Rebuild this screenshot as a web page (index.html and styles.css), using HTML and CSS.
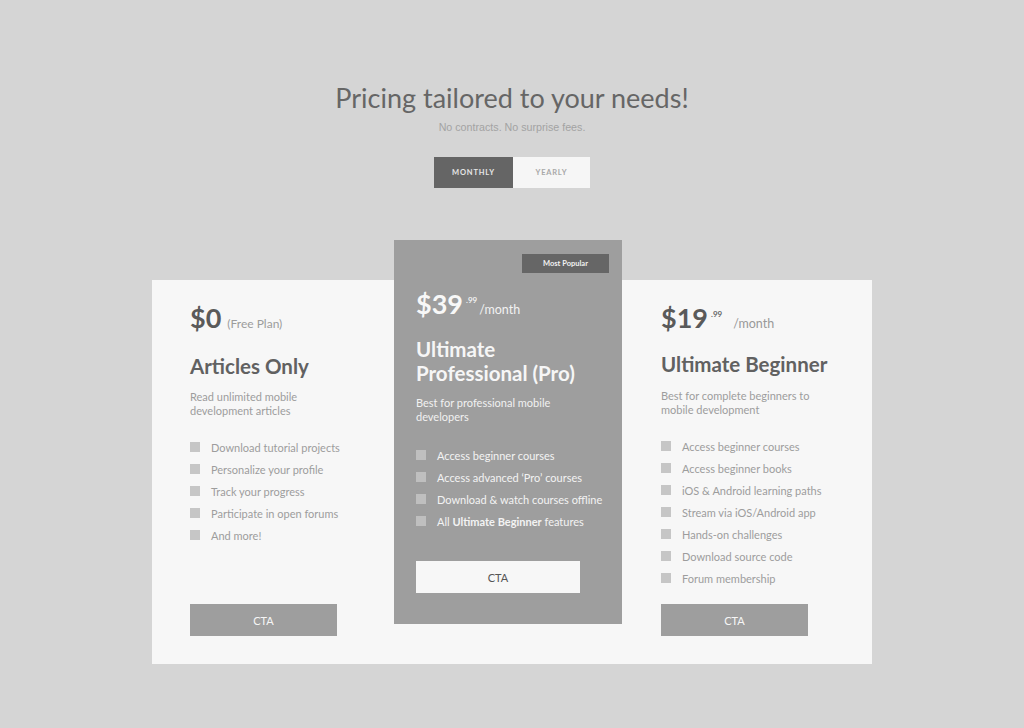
FILE: index.html
```html
<!DOCTYPE html>
<html lang="en">
<head>
<meta charset="utf-8">
<title>Pricing</title>
<link rel="stylesheet" href="styles.css">
</head>
<body>
<header class="intro">
  <h1 class="intro-title">Pricing tailored to your needs!</h1>
  <p class="intro-sub">No contracts. No surprise fees.</p>
  <div class="toggle">
    <span class="toggle-opt toggle-opt--active">MONTHLY</span>
    <span class="toggle-opt">YEARLY</span>
  </div>
</header>

<section class="panel">
  <article class="plan plan--left">
    <div class="price"><span class="price-amount">$0</span><span class="price-note">(Free Plan)</span></div>
    <h2 class="plan-title">Articles Only</h2>
    <p class="plan-desc">Read unlimited mobile<br>development articles</p>
    <ul class="features">
      <li><span class="box"></span><span>Download tutorial projects</span></li>
      <li><span class="box"></span><span>Personalize your profile</span></li>
      <li><span class="box"></span><span>Track your progress</span></li>
      <li><span class="box"></span><span>Participate in open forums</span></li>
      <li><span class="box"></span><span>And more!</span></li>
    </ul>
    <a class="cta">CTA</a>
  </article>

  <article class="plan plan--featured">
    <span class="badge">Most Popular</span>
    <div class="price"><span class="price-amount">$39</span><sup class="price-cents">.99</sup><span class="price-per">/month</span></div>
    <h2 class="plan-title">Ultimate<br>Professional (Pro)</h2>
    <p class="plan-desc">Best for professional mobile<br>developers</p>
    <ul class="features">
      <li><span class="box"></span><span>Access beginner courses</span></li>
      <li><span class="box"></span><span>Access advanced ‘Pro’ courses</span></li>
      <li><span class="box"></span><span>Download &amp; watch courses offline</span></li>
      <li><span class="box"></span><span>All <strong>Ultimate Beginner</strong> features</span></li>
    </ul>
    <a class="cta cta--light">CTA</a>
  </article>

  <article class="plan plan--right">
    <div class="price"><span class="price-amount">$19</span><sup class="price-cents">.99</sup><span class="price-per price-per--wide">/month</span></div>
    <h2 class="plan-title">Ultimate Beginner</h2>
    <p class="plan-desc">Best for complete beginners to<br>mobile development</p>
    <ul class="features">
      <li><span class="box"></span><span>Access beginner courses</span></li>
      <li><span class="box"></span><span>Access beginner books</span></li>
      <li><span class="box"></span><span>iOS &amp; Android learning paths</span></li>
      <li><span class="box"></span><span>Stream via iOS/Android app</span></li>
      <li><span class="box"></span><span>Hands-on challenges</span></li>
      <li><span class="box"></span><span>Download source code</span></li>
      <li><span class="box"></span><span>Forum membership</span></li>
    </ul>
    <a class="cta">CTA</a>
  </article>
</section>
</body>
</html>
```

FILE: styles.css
```css
* { box-sizing: border-box; }

body {
  margin: 0;
  background: #d5d5d5;
  font-family: "Lato", "Noto Sans", sans-serif;
  color: #666;
}

.intro {
  padding-top: 81px;
  text-align: center;
}

.intro-title {
  margin: 0;
  font-size: 27px;
  line-height: 34px;
  font-weight: 400;
  color: #666;
}

.intro-sub {
  margin: 5px 0 0;
  font-family: "Liberation Sans", Arial, sans-serif;
  font-size: 10.7px;
  line-height: 14px;
  color: #a3a3a3;
}

.toggle {
  display: inline-flex;
  margin-top: 23px;
  height: 31px;
}

.toggle-opt {
  display: flex;
  align-items: center;
  justify-content: center;
  width: 77px;
  background: #f6f6f6;
  font-size: 7.5px;
  font-weight: 700;
  letter-spacing: 0.8px;
  color: #a8a8a8;
}

.toggle-opt--active {
  width: 79px;
  background: #656565;
  color: #e6e6e6;
}

.panel {
  display: flex;
  width: 720px;
  height: 384px;
  margin: 92px auto 0;
  background: #f7f7f7;
}

.plan {
  display: flex;
  flex-direction: column;
  padding-top: 20px;
  padding-bottom: 28px;
}

.plan--left { width: 242px; padding-left: 38px; }
.plan--right { width: 250px; padding-left: 39px; }

.plan--featured {
  position: relative;
  width: 228px;
  height: 384px;
  margin-top: -40px;
  padding: 46px 0 31px 22px;
  background: #9e9e9e;
  color: #f6f6f6;
}

.badge {
  position: absolute;
  top: 14px;
  right: 13px;
  width: 87px;
  height: 19px;
  display: flex;
  align-items: center;
  justify-content: center;
  background: #666;
  color: #f2f2f2;
  font-size: 7.5px;
  font-weight: 700;
}

.price {
  display: flex;
  align-items: baseline;
  height: 36px;
  line-height: 36px;
}

.price-amount {
  font-size: 27px;
  font-weight: 700;
  color: #5a5a5a;
}

.plan--featured .price-amount { color: #f8f8f8; }

.price-note {
  margin-left: 6px;
  font-size: 12px;
  color: #9c9c9c;
}

.price-cents {
  align-self: flex-start;
  margin-left: 3px;
  font-size: 8px;
  line-height: 28px;
  font-weight: 700;
  color: #666;
}

.plan--featured .price-cents { color: #f2f2f2; }

.price-per {
  margin-left: 2px;
  font-size: 12.5px;
  color: #999;
}

.price-per--wide { margin-left: 11px; }

.plan--featured .price-per { color: #f2f2f2; }

.plan-title {
  margin: 16px 0 0;
  font-size: 20.5px;
  line-height: 28px;
  font-weight: 700;
  color: #616161;
}

.plan--featured .plan-title {
  margin-top: 15px;
  line-height: 24px;
  color: #f6f6f6;
}

.plan--right .plan-title { margin-top: 14px; }

.plan-desc {
  margin: 10px 0 0;
  font-size: 11px;
  line-height: 14px;
  color: #9d9d9d;
}

.plan--right .plan-desc { margin-top: 11px; }

.plan--featured .plan-desc {
  margin-top: 11px;
  color: #f1f1f1;
}

.features {
  list-style: none;
  margin: 18px 0 0;
  padding: 0;
}

.plan--featured .features { margin-top: 20px; }

.features li {
  display: flex;
  align-items: center;
  height: 22px;
  font-size: 11px;
  color: #9d9d9d;
}

.plan--featured .features li { color: #f3f3f3; }

.features strong { font-weight: 700; }

.box {
  width: 10px;
  height: 10px;
  margin-right: 11px;
  background: #c6c6c6;
  flex: none;
}

.plan--featured .box { background: #bfbfbf; }

.cta {
  margin-top: auto;
  display: flex;
  align-items: center;
  justify-content: center;
  width: 147px;
  height: 32px;
  background: #9e9e9e;
  color: #f6f6f6;
  font-size: 11px;
}

.cta--light {
  width: 164px;
  background: #f7f7f7;
  color: #555;
}
```
